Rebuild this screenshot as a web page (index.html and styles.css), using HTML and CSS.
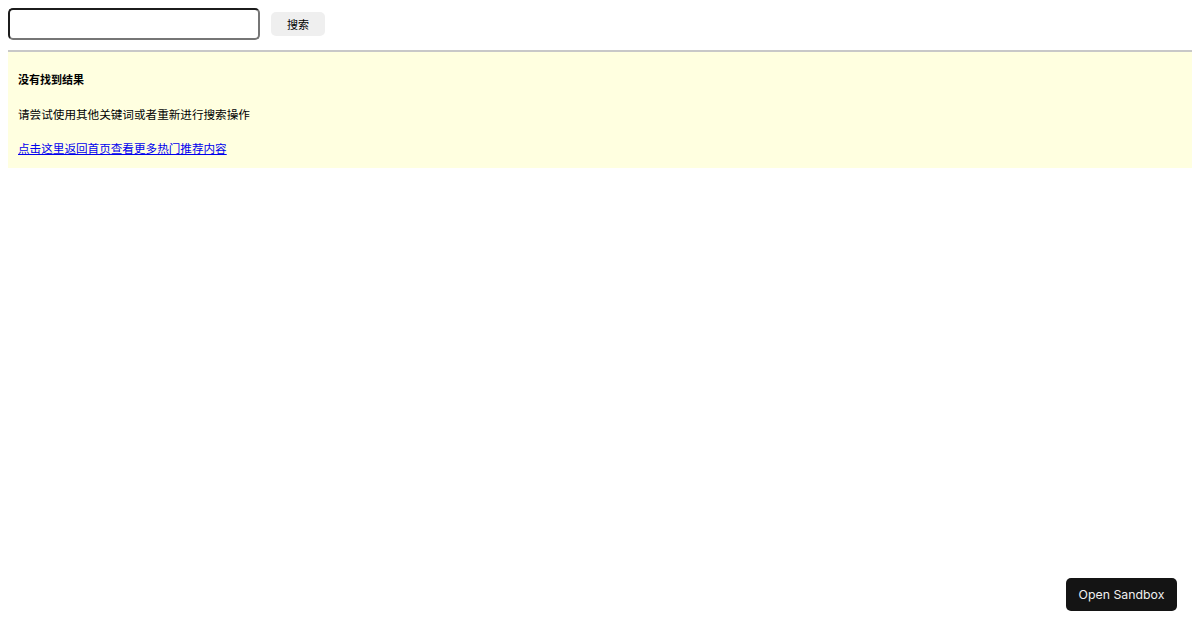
FILE: index.html
```html
<!DOCTYPE html>
<html lang="zh-CN">
<head>
<meta charset="utf-8">
<title>搜索</title>
<link rel="stylesheet" href="styles.css">
</head>
<body>
<div class="search-row">
  <input class="search-input" type="text" aria-label="搜索">
  <button class="search-btn" type="button">搜索</button>
</div>
<hr class="divider">
<div class="notice">
  <p class="notice-title">没有找到结果</p>
  <p class="notice-text">请尝试使用其他关键词或者重新进行搜索操作</p>
  <p class="notice-text"><a class="notice-link" href="#">点击这里返回首页查看更多热门推荐内容</a></p>
</div>
<button class="sandbox-btn" type="button">Open Sandbox</button>
</body>
</html>
```

FILE: styles.css
```css
html, body {
  background: #ffffff;
}
body {
  margin: 8px;
  font-family: "Liberation Sans", "Noto Sans CJK SC", sans-serif;
  color: #000;
}
.search-row {
  display: flex;
  align-items: center;
  gap: 11px;
  height: 32px;
}
.search-input {
  box-sizing: border-box;
  width: 252px;
  height: 32px;
  margin: 0;
  padding: 0 8px;
  border: 2px solid;
  border-color: #1c1c1c #767676 #767676 #1c1c1c;
  border-radius: 5px;
  background: #fff;
  outline: none;
  font-size: 14px;
}
.search-btn {
  box-sizing: border-box;
  width: 54px;
  height: 24px;
  margin: 0;
  padding: 0;
  border: 0;
  border-radius: 5px;
  background: #efefef;
  color: #000;
  font-family: "Noto Sans CJK SC", sans-serif;
  font-size: 11px;
  line-height: 24px;
}
.divider {
  margin: 10px 0 0;
  border: 0;
  border-top: 2px solid #c8c8c8;
  height: 0;
}
.notice {
  background: #ffffe0;
  padding: 18px 10px 10px;
  font-family: "Noto Sans CJK SC", sans-serif;
  font-size: 11.6px;
}
.notice p {
  margin: 16px 0 0;
  line-height: 18.5px;
}
.notice p.notice-title {
  margin-top: 0;
  font-weight: 700;
  font-size: 11px;
}
.notice-link {
  color: #0000ee;
  text-decoration: underline;
}
.sandbox-btn {
  position: fixed;
  right: 23px;
  bottom: 19px;
  box-sizing: border-box;
  width: 111px;
  height: 33px;
  padding: 0;
  border: 0;
  border-radius: 5px;
  background: #141414;
  color: #f0f0f0;
  font-family: Inter, "Liberation Sans", sans-serif;
  font-size: 12.3px;
}
```
